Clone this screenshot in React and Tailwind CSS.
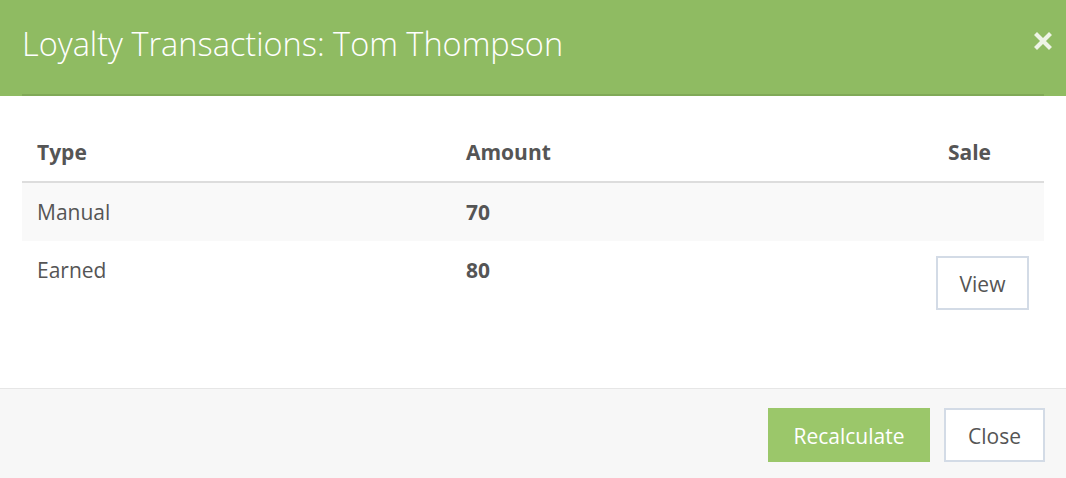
import React from "react";

const rows = [
    { type: "Manual", amount: 70, sale: false },
    { type: "Earned", amount: 80, sale: true },
];

const App = () => {
    return (
        <div className="w-[1066px] h-[478px] overflow-hidden bg-white flex flex-col text-[#555555]" style={{ fontFamily: '"Open Sans", "Liberation Sans", sans-serif' }}>
            {/* Header */}
            <div className="h-[96px] bg-[#8fbb62] flex flex-col shrink-0">
                <div className="flex-1 flex items-center justify-between pl-[22px] pr-[14px]">
                    <h4 className="text-[32.5px] font-light text-white leading-none -mt-[6px]">Loyalty Transactions: Tom Thompson</h4>
                    <button className="w-[18px] h-[18px] -mt-[12px]">
                        <svg viewBox="0 0 18 18" className="w-[18px] h-[18px]">
                            <path d="M3 3 L15 15 M15 3 L3 15" stroke="#eef4e6" strokeWidth="4.2" strokeLinecap="square" />
                        </svg>
                    </button>
                </div>
                <div className="mx-[22px] h-[2px] bg-[#80a957]" />
            </div>

            {/* Body */}
            <div className="px-[22px] pt-[27px] h-[292px] shrink-0">
                <div className="grid grid-cols-[429px_1fr_200px] border-b-2 border-[#dddddd] text-[21px] font-bold leading-[30px]">
                    <div className="pl-[15px] py-[14px]">Type</div>
                    <div className="pl-[15px] py-[14px]">Amount</div>
                    <div className="pr-[53px] py-[14px] text-right">Sale</div>
                </div>
                {rows.map((r, i) => (
                    <div key={r.type} className={`grid grid-cols-[429px_1fr_200px] text-[21px] leading-[30px] ${i % 2 === 0 ? "bg-[#f9f9f9]" : "bg-white"}`}>
                        <div className="pl-[15px] py-[14px]">{r.type}</div>
                        <div className="pl-[15px] py-[14px] font-bold">{r.amount}</div>
                        <div className="pr-[15px] py-[15px] flex justify-end">
                            {r.sale && (
                                <button className="w-[93px] h-[54px] pt-[2px] border-2 border-[#d3dbe6] bg-white text-[21px] text-[#555555]">View</button>
                            )}
                        </div>
                    </div>
                ))}
            </div>

            {/* Footer */}
            <div className="flex-1 border-t border-[#e6e6e6] bg-[#f7f7f7] flex justify-end items-start gap-[14px] pt-[19px] pr-[21px]">
                <button className="w-[162px] h-[54px] pt-[3px] bg-[#9bc76a] text-white text-[21px]">Recalculate</button>
                <button className="w-[101px] h-[54px] pt-[3px] border-2 border-[#d3dbe6] bg-white text-[21px] text-[#555555]">Close</button>
            </div>
        </div>
    );
};

export default App;
